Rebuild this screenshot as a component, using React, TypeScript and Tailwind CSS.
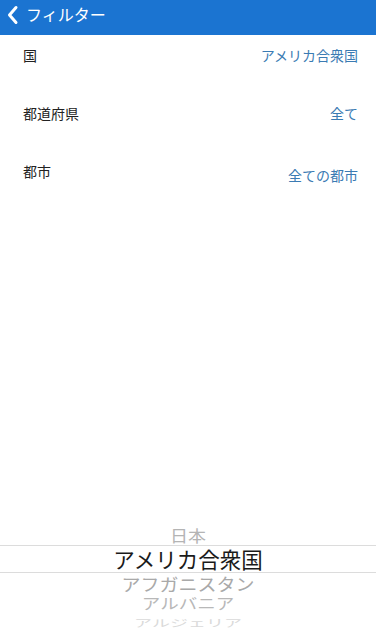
import React from "react";

const font = { fontFamily: '"Noto Sans CJK JP", "Noto Sans", sans-serif' };

const rows = [
  { label: "国", value: "アメリカ合衆国", offset: "" },
  { label: "都道府県", value: "全て", offset: "" },
  { label: "都市", value: "全ての都市", offset: "mt-[4px]" },
];

export default function App() {
  return (
    <div className="h-[640px] w-[376px] flex flex-col bg-white overflow-hidden" style={font}>
      {/* Header */}
      <div className="h-[35px] bg-[#1b74d1] flex items-center shrink-0">
        <svg width="26" height="35" viewBox="0 0 26 35" className="shrink-0">
          <path d="M16 7.5 L9.5 15 L16 22.5" fill="none" stroke="white" strokeWidth="3" strokeLinecap="round" strokeLinejoin="round" />
        </svg>
        <span className="text-white text-[16px] leading-[20px] -mt-[8px]">フィルター</span>
      </div>

      {/* Settings rows */}
      <div className="pt-[10px] px-[23px]">
        {rows.map((r) => (
          <div key={r.label} className="h-[58px] flex justify-between items-start">
            <span className="text-[14px] leading-[20px] text-[#222]">{r.label}</span>
            <span className={`text-[14px] leading-[20px] text-[#3b7bb3] -mr-[5px] ${r.offset}`}>{r.value}</span>
          </div>
        ))}
      </div>

      <div className="flex-1" />

      {/* Wheel picker */}
      <div className="flex flex-col items-center pb-[8px]">
        <div className="h-[21px] w-full flex items-center justify-center text-[18px] text-[#b4b4b4] leading-none scale-y-90">
          日本
        </div>
        <div className="h-[28px] w-full border-y border-[#dcdcdc] flex items-center justify-center text-[21.5px] text-[#1a1a1a] leading-none">
          アメリカ合衆国
        </div>
        <div className="h-[20px] w-full flex items-center justify-center text-[19px] text-[#a9a9a9] leading-none scale-y-90">
          アフガニスタン
        </div>
        <div className="h-[21px] w-full flex items-center justify-center text-[18.5px] text-[#b8b8b8] leading-none scale-y-[0.8]">
          アルバニア
        </div>
        <div className="h-[18px] w-full flex items-center justify-center text-[18px] text-[#dadada] leading-none scale-y-[0.55]">
          アルジェリア
        </div>
      </div>
    </div>
  );
}
